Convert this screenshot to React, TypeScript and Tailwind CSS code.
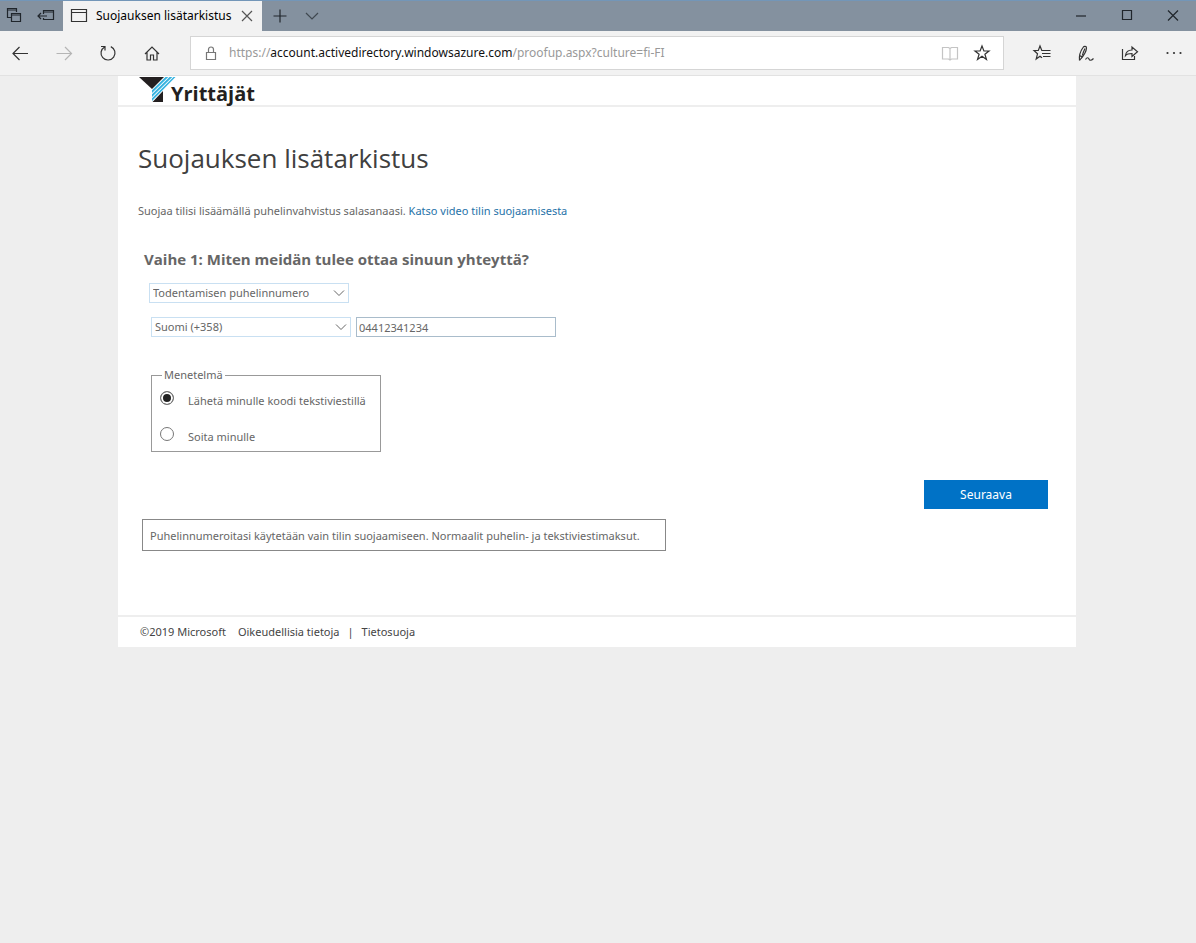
import React from 'react';

type IconProps = {
  className?: string;
  children: React.ReactNode;
};

// 20x20 line icon used all over the browser frame
function Icon({ className = "", children }: IconProps) {
  return (
    <svg viewBox="0 0 20 20" fill="none" stroke="currentColor" strokeWidth="1.2" className={`w-5 h-5 shrink-0 ${className}`} aria-hidden="true">
      {children}
    </svg>
  );
}

const toolButton = "w-10 h-10 flex items-center justify-center";

function TabBar() {
  return (
    <div className="h-[31px] flex bg-[#84919f] border-t border-[#7396b8] text-[#20262c]">
      <button type="button" aria-label="Tabs you've set aside" className="w-7 flex items-center justify-center">
        <Icon>
          <path d="M7 11.500H3.500v-9h9V6M3.500 4h9" />
          <path d="M7.500 7.500h9v8h-9zM7.500 9h9" />
        </Icon>
      </button>
      <button type="button" aria-label="Set these tabs aside" className="w-[35px] flex items-center justify-center">
        <Icon>
          <path d="M7.500 8V4.500h10v9h-10V12M7.500 6h10" />
          <path d="M2 10h9M5 7l-3 3 3 3" />
        </Icon>
      </button>

      <div className="w-[199px] flex items-center bg-[#f2f2f2] text-black">
        <Icon className="ml-[6px] text-[#333]">
          <path d="M2.500 3.500h15v12h-15zM2.500 6.500h15" />
        </Icon>
        <span className="ml-[7px] flex-1 text-[12px] whitespace-nowrap">Suojauksen lisätarkistus</span>
        <button type="button" aria-label="Close tab" className="w-8 h-full flex items-center justify-center text-[#555]">
          <Icon>
            <path d="M5 5l10 10M15 5L5 15" />
          </Icon>
        </button>
      </div>

      <button type="button" aria-label="New tab" className="w-9 flex items-center justify-center">
        <Icon>
          <path d="M10 3.500v13M3.500 10h13" />
        </Icon>
      </button>
      <button type="button" aria-label="Tab previews" className="w-7 flex items-center justify-center text-[#3f4850]">
        <Icon>
          <path d="M4 7l6 6 6-6" />
        </Icon>
      </button>

      <div className="ml-auto flex">
        <button type="button" aria-label="Minimize" className="w-[46px] flex items-center justify-center">
          <Icon><path d="M5 10h10" /></Icon>
        </button>
        <button type="button" aria-label="Maximize" className="w-[46px] flex items-center justify-center">
          <Icon><path d="M5.500 4.500h9v9h-9z" /></Icon>
        </button>
        <button type="button" aria-label="Close" className="w-[46px] flex items-center justify-center">
          <Icon><path d="M5 4.500l10 10M15 4.500L5 14.500" /></Icon>
        </button>
      </div>
    </div>
  );
}

function Toolbar() {
  return (
    <div className="h-[45px] flex items-center bg-[#f2f2f2] border-b border-[#e2e2e2] text-[#333]">
      <div className="flex gap-1">
        <button type="button" aria-label="Back" className={toolButton}>
          <Icon><path d="M3 10.500h15M9.500 4L3 10.500 9.500 17" /></Icon>
        </button>
        <button type="button" aria-label="Forward" className={`${toolButton} text-[#b5b5b5]`}>
          <Icon><path d="M2.500 10.500h15M11 4l6.500 6.500L11 17" /></Icon>
        </button>
        <button type="button" aria-label="Refresh" className={toolButton}>
          <Icon><path d="M12.800 3.600a7 7 0 1 1-6.200.3M3 3.500h4v4" /></Icon>
        </button>
        <button type="button" aria-label="Home" className={toolButton}>
          <Icon><path d="M3 11l7-7 7 7M5 9v8h3.500v-5h3v5H15V9" /></Icon>
        </button>
      </div>

      <div className="ml-[18px] mr-[18px] h-[34px] flex-1 flex items-center bg-white border border-[#d5d5d5]">
        <Icon className="ml-[10px] text-[#777]">
          <path d="M5.500 9.500h9v7h-9zM7.500 9.500V6.500a2.500 2.500 0 0 1 5 0v3" />
        </Icon>
        <div className="ml-2 flex-1 text-[12px] text-[#999] whitespace-nowrap">
          https://<span className="text-[#111]">account.activedirectory.windowsazure.com</span>/proofup.aspx?culture=fi-FI
        </div>
        <button type="button" aria-label="Reading view" className="w-8 flex justify-center text-[#c4c4c4]">
          <Icon><path d="M2.500 4.500h6l1.500 1 1.500-1h6v11.500h-6l-1.500 1-1.500-1h-6zM10 5.500v11" /></Icon>
        </button>
        <button type="button" aria-label="Add to favorites" className="w-8 mr-[5px] flex justify-center">
          <Icon><path d="M10 3l1.900 5h5.100l-4.100 3.200 1.600 5.300-4.500-3.200-4.500 3.200 1.600-5.300L3 8h5.100z" /></Icon>
        </button>
      </div>

      <div className="flex gap-1 pr-[2px]">
        <button type="button" aria-label="Favorites" className={toolButton}>
          <Icon><path d="M11.500 7.500H9.800L8 3 6.300 7.500H2l3.500 3.300L4.200 16 8 13.200l2 1.500M11 7.500h7.500M10 10.500h8.500M11 13.500h7.500" /></Icon>
        </button>
        <button type="button" aria-label="Add notes" className={toolButton}>
          <Icon>
            <path d="M3.500 17.500c-.5-4 1-9.500 3.500-13 1-1.500 3.500-1.500 3.500.5 0 3-3 8-5.500 10.500M4 12.500c1 1.500 2.500 1 3.500-.5M6.500 12c.5-2.500 1.500-4.500 2.500-6.500M3.500 17.500l1.500-2" />
            <path d="M9.500 16.500c1.500-2.500 3-2 3.500-.5s2 2 4.500-.5" />
          </Icon>
        </button>
        <button type="button" aria-label="Share" className={toolButton}>
          <Icon>
            <path d="M2.500 6v10.500h12V13" />
            <path d="M5.500 12.500c.5-4 3-5.500 6.500-5.500V4l5.500 4.800-5.500 4.700v-3c-3 0-5 .2-6.500 2z" />
          </Icon>
        </button>
        <button type="button" aria-label="Settings and more" className={toolButton}>
          <Icon>
            <g fill="currentColor" stroke="none">
              <circle cx="3.500" cy="10" r="1.100" />
              <circle cx="10" cy="10" r="1.100" />
              <circle cx="16.500" cy="10" r="1.100" />
            </g>
          </Icon>
        </button>
      </div>
    </div>
  );
}

function Logo() {
  return (
    <div className="flex text-[#231f20]">
      <svg viewBox="0 0 38 28" className="w-[38px] h-7 shrink-0" aria-hidden="true">
        <path d="M1 1h25L14 13z" fill="#231f20" />
        <path d="M25 15v11H14.500z" fill="#231f20" />
        <path d="M27.500 1h2.800L14 17v-2.800zM31.500 1h2.800L14 21v-2.800zM35.500 1h2L14 25v-2.800z" fill="#37b3e0" />
      </svg>
      <span className="-ml-[5px] mt-[2px] font-['Open_Sans','Noto_Sans',sans-serif] text-[20px] leading-8 font-bold">Yrittäjät</span>
    </div>
  );
}

type SelectProps = {
  label: string;
  value: string;
};

function Select({ label, value }: SelectProps) {
  return (
    <div className="grid w-[200px] h-5 items-center">
      <select aria-label={label} defaultValue={value} className="col-start-1 row-start-1 appearance-none w-full h-5 pl-[3px] pr-6 bg-white border border-[#c9e0f2] text-[11px] leading-4 text-[#666]">
        <option>{value}</option>
      </select>
      <svg viewBox="0 0 12 8" fill="none" stroke="#666" className="col-start-1 row-start-1 justify-self-end mr-1 w-3 h-2 pointer-events-none" aria-hidden="true">
        <path d="M1 1.500l5 5 5-5" />
      </svg>
    </div>
  );
}

const methods = [
  { id: "sms", label: "Lähetä minulle koodi tekstiviestillä" },
  { id: "call", label: "Soita minulle" },
];

export default function App() {
  return (
    <div className="min-h-screen flex flex-col bg-[#eeeeee] font-['Noto_Sans','Open_Sans',sans-serif]">
      <TabBar />
      <Toolbar />

      <div className="pl-[118px] pr-[120px]">
        <div className="bg-white text-[11px] leading-4 text-[#666]">
          <header className="h-[31px] pl-5 border-b-2 border-[#eeeeee]">
            <Logo />
          </header>

          <main className="pl-5 pr-7 pt-[31px] pb-16">
            <h1 className="font-['Open_Sans','Noto_Sans',sans-serif] text-[26px] leading-10 text-[#404040]">Suojauksen lisätarkistus</h1>
            <p className="mt-[25px]">
              Suojaa tilisi lisäämällä puhelinvahvistus salasanaasi.{" "}
              <a href="#video" className="text-[#2672a8]">Katso video tilin suojaamisesta</a>
            </p>

            <form>
              <h2 className="mt-7 ml-[6px] font-['Open_Sans','Noto_Sans',sans-serif] text-[15px] leading-6 font-bold">Vaihe 1: Miten meidän tulee ottaa sinuun yhteyttä?</h2>
              <div className="mt-3 ml-[11px]">
                <Select label="Yhteystapa" value="Todentamisen puhelinnumero" />
              </div>
              <div className="mt-[14px] ml-[13px] flex gap-[5px]">
                <Select label="Maa" value="Suomi (+358)" />
                <input type="tel" aria-label="Puhelinnumero" defaultValue="04412341234" className="w-[200px] h-5 px-[2px] border border-[#a9bccb] text-[11px] leading-4" />
              </div>

              <fieldset className="mt-[30px] ml-[13px] w-[230px] h-[85px] px-2 border border-[#999]">
                <legend className="ml-[2px] px-[2px]">Menetelmä</legend>
                <div className="pt-2 flex flex-col gap-[18px]">
                  {methods.map((method, index) => (
                    <label key={method.id} className="flex items-start gap-[14px] whitespace-nowrap">
                      <input
                        type="radio"
                        name="method"
                        defaultChecked={index === 0}
                        className="appearance-none shrink-0 w-[14px] h-[14px] rounded-full border border-[#777] bg-white checked:bg-[#222] checked:shadow-[inset_0_0_0_2px_white]"
                      />
                      <span className="pt-[2px]">{method.label}</span>
                    </label>
                  ))}
                </div>
              </fieldset>

              <div className="mt-7 flex justify-end">
                <button type="submit" className="w-[124px] h-[29px] bg-[#0072c6] text-[12px] text-white">Seuraava</button>
              </div>
            </form>

            <p className="mt-[10px] ml-1 w-[524px] px-[7px] pt-2 pb-[6px] border border-[#888] whitespace-nowrap">
              Puhelinnumeroitasi käytetään vain tilin suojaamiseen. Normaalit puhelin- ja tekstiviestimaksut.
            </p>
          </main>

          <footer className="h-8 pl-[22px] flex items-center border-t-2 border-[#eeeeee] text-[#444]">
            <span>©2019 Microsoft</span>
            <a href="#legal" className="ml-3">Oikeudellisia tietoja</a>
            <span className="mx-2">|</span>
            <a href="#privacy">Tietosuoja</a>
          </footer>
        </div>
      </div>
    </div>
  );
}
